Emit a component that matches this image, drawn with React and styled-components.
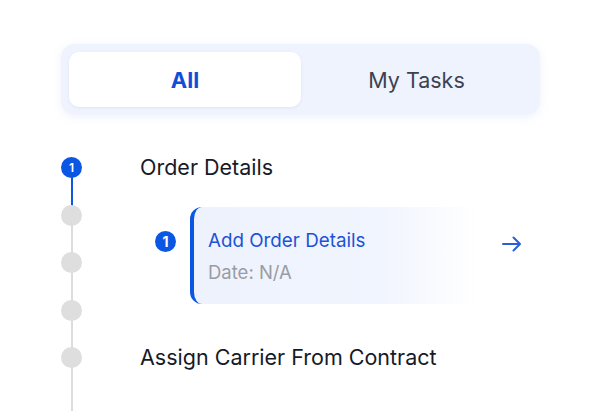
import React from "react";
import styled, { createGlobalStyle } from "styled-components";

const Global = createGlobalStyle`
  html, body { margin: 0; padding: 0; background: #ffffff; }
  body { font-family: "Inter", "Open Sans", sans-serif; overflow: hidden; }
`;

const Page = styled.div`
  width: 600px;
  height: 411px;
  box-sizing: border-box;
  padding: 44px 60px 0 61px;
  display: flex;
  flex-direction: column;
  overflow: hidden;
`;

const Tabs = styled.div`
  width: 479px;
  height: 71px;
  box-sizing: border-box;
  padding: 8px;
  border-radius: 14px;
  background: #eef3fd;
  box-shadow: 0 2px 10px rgba(120, 150, 220, 0.12);
  display: grid;
  grid-template-columns: 232px 1fr;
`;

const Tab = styled.div`
  display: flex;
  align-items: center;
  justify-content: center;
  border-radius: 10px;
  font-size: ${(p) => (p.$active ? 22 : 21.5)}px;
  background: ${(p) => (p.$active ? "#ffffff" : "transparent")};
  color: ${(p) => (p.$active ? "#0f4fd8" : "#3d4250")};
  font-weight: ${(p) => (p.$active ? 700 : 400)};
  box-shadow: ${(p) => (p.$active ? "0 1px 3px rgba(120,140,200,0.12)" : "none")};
`;

const Timeline = styled.div`
  margin-top: 40px;
  display: flex;
  gap: 59px;
`;

const Rail = styled.div`
  position: relative;
  width: 21px;
  padding-top: 2px;
  display: flex;
  flex-direction: column;
  gap: 26.5px;
  &::before {
    content: "";
    position: absolute;
    left: 9.5px;
    top: 12px;
    width: 2px;
    height: 300px;
    background: #dcdcdc;
  }
  &::after {
    content: "";
    position: absolute;
    left: 9.5px;
    top: 12px;
    width: 2px;
    height: 46px;
    background: #0b57e3;
  }
`;

const Dot = styled.div`
  position: relative;
  z-index: 1;
  width: 21px;
  height: 21px;
  border-radius: 50%;
  background: ${(p) => (p.$active ? "#0b57e3" : "#dedede")};
  color: #fff;
  font-size: 12px;
  font-weight: 600;
  display: flex;
  align-items: center;
  justify-content: center;
`;

const Content = styled.div`
  display: flex;
  flex-direction: column;
  flex: 1;
  margin-left: -1px;
`;

const StepTitle = styled.div`
  font-size: 21.5px;
  line-height: 24px;
  color: #161a26;
  margin-top: ${(p) => p.$mt || 0}px;
`;

const TaskRow = styled.div`
  margin-top: 28px;
  margin-left: 15px;
  display: flex;
  align-items: flex-start;
  gap: 14px;
`;

const Badge = styled.div`
  margin-top: 24px;
  width: 21px;
  height: 21px;
  flex: none;
  border-radius: 50%;
  background: #0b57e3;
  color: #fff;
  font-size: 14px;
  font-weight: 700;
  display: flex;
  align-items: center;
  justify-content: center;
`;

const Card = styled.div`
  flex: 1;
  height: 97px;
  box-sizing: border-box;
  border-left: 4px solid #0b57e3;
  border-radius: 12px;
  background: linear-gradient(90deg, #edf2fd 0%, #f1f5fe 55%, #ffffff 82%);
  padding: 22px 18px 0 14px;
  display: flex;
  align-items: flex-start;
`;

const CardText = styled.div`
  flex: 1;
  display: flex;
  flex-direction: column;
  gap: 7px;
`;

const CardTitle = styled.div`
  font-size: 18.8px;
  line-height: 24px;
  color: #1c53d6;
`;

const CardDate = styled.div`
  font-size: 18.5px;
  line-height: 24px;
  color: #9a9ca3;
`;

const Arrow = styled.svg`
  margin-top: 7px;
  flex: none;
`;

export default function App() {
  return (
    <>
      <Global />
      <Page>
        <Tabs>
          <Tab $active>All</Tab>
          <Tab>My Tasks</Tab>
        </Tabs>
        <Timeline>
          <Rail>
            <Dot $active>1</Dot>
            <Dot />
            <Dot />
            <Dot />
            <Dot />
          </Rail>
          <Content>
            <StepTitle>Order Details</StepTitle>
            <TaskRow>
              <Badge>1</Badge>
              <Card>
                <CardText>
                  <CardTitle>Add Order Details</CardTitle>
                  <CardDate>Date: N/A</CardDate>
                </CardText>
                <Arrow width="20" height="16" viewBox="0 0 20 16" fill="none">
                  <path d="M1 8H18M11.5 1.5L18 8L11.5 14.5" stroke="#2a5fd8" strokeWidth="2" strokeLinecap="round" strokeLinejoin="round" />
                </Arrow>
              </Card>
            </TaskRow>
            <StepTitle $mt={41}>Assign Carrier From Contract</StepTitle>
          </Content>
        </Timeline>
      </Page>
    </>
  );
}
